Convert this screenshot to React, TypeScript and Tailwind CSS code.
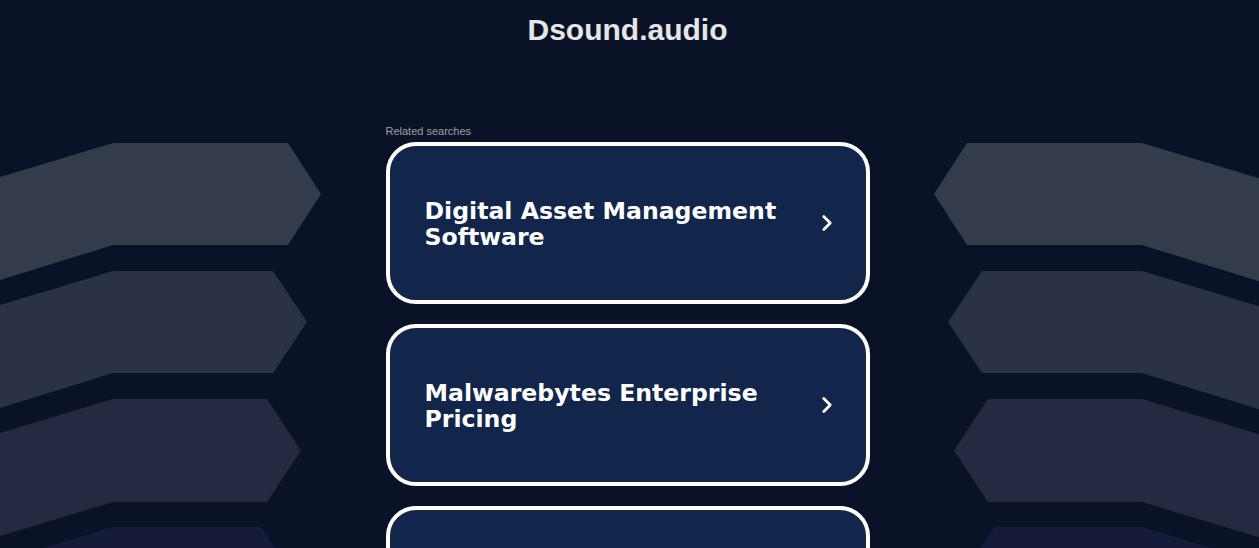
import { ChevronRight } from 'lucide-react';

const searches = [
  'Digital Asset Management Software',
  'Malwarebytes Enterprise Pricing',
  'Cloud Backup Solutions',
];

// bands drawn on the left; the right side is the same drawing mirrored
const bands = [
  { top: 143, bottom: 245, flat: 288, tip: 321, lt: 177, lb: 280, fill: '#343b4d' },
  { top: 271, bottom: 373, flat: 273, tip: 307, lt: 305, lb: 408, fill: '#2c3246' },
  { top: 399, bottom: 502, flat: 267, tip: 301, lt: 433, lb: 536, fill: '#252a42' },
  { top: 527, bottom: 630, flat: 261, tip: 295, lt: 561, lb: 664, fill: '#161c38' },
];

function Bands({ mirror }: { mirror?: boolean }) {
  return (
    <svg
      width="340"
      height="548"
      viewBox="-10 0 340 548"
      className={`absolute top-0 ${mirror ? 'right-[-6px] -scale-x-100' : 'left-[-10px]'}`}
    >
      {bands.map((b, i) => {
        const mid = (b.top + b.bottom) / 2;
        const t0 = b.lt - (10 * (b.top - b.lt)) / 113;
        const b0 = b.lb - (10 * (b.bottom - b.lb)) / 113;
        const pts = `-10,${t0} 113,${b.top} ${b.flat},${b.top} ${b.tip},${mid} ${b.flat},${b.bottom} 113,${b.bottom} -10,${b0}`;
        return <polygon key={i} points={pts} fill={b.fill} />;
      })}
    </svg>
  );
}

export default function App() {
  return (
    <div className="relative h-[548px] w-full overflow-hidden bg-[#0a1227]">
      <Bands />
      <Bands mirror />

      <div className="relative flex flex-col items-center pr-[4px]">
        <h1 className="mt-[13px] text-[30px] font-bold leading-[34px] text-[#e6e6e6] [font-family:'Liberation_Sans',Arial,sans-serif]">
          Dsound.audio
        </h1>

        <div className="mt-[78px] w-[484px]">
          <p className="mb-[4px] text-[11px] leading-[13px] text-[#a0a0a0] [font-family:'Liberation_Sans',Arial,sans-serif]">
            Related searches
          </p>
          <div className="flex flex-col gap-5">
            {searches.map((s) => (
              <div
                key={s}
                className="flex h-[162px] items-center justify-between rounded-[30px] border-[4px] border-white bg-[#12264b] pl-[35px] pr-[26px]"
              >
                <span className="max-w-[380px] pt-[2px] text-[23.6px] font-bold leading-[26px] text-white [font-family:'DejaVu_Sans',Verdana,sans-serif]">
                  {s}
                </span>
                <ChevronRight size={26} strokeWidth={2.5} className="text-white" />
              </div>
            ))}
          </div>
        </div>
      </div>
    </div>
  );
}
